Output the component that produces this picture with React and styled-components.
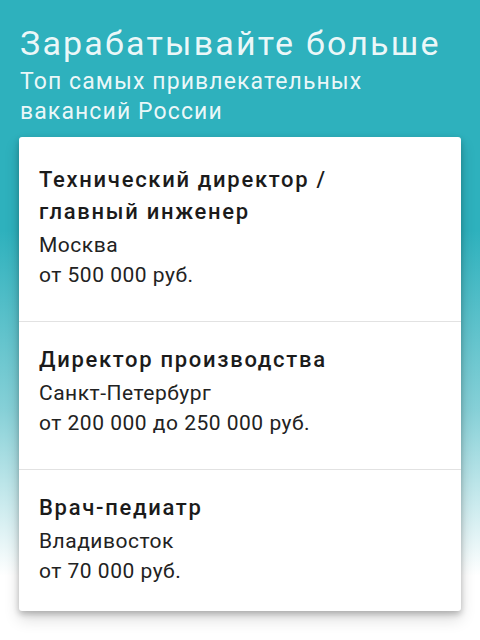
import React from "react";
import styled, { createGlobalStyle } from "styled-components";

const jobs = [
  {
    title: "Технический директор / главный инженер",
    city: "Москва",
    salary: "от 500 000 руб.",
    top: 27,
    bottom: 31,
  },
  {
    title: "Директор производства",
    city: "Санкт-Петербург",
    salary: "от 200 000 до 250 000 руб.",
    top: 22,
    bottom: 31,
  },
  {
    title: "Врач-педиатр",
    city: "Владивосток",
    salary: "от 70 000 руб.",
    top: 22,
    bottom: 25,
  },
];

const App = () => {
  return (
    <>
      <GlobalStyle />
      <Page>
        <Header>
          <Title>Зарабатывайте больше</Title>
          <Subtitle>Топ самых привлекательных вакансий России</Subtitle>
        </Header>
        <Card>
          {jobs.map((job) => (
            <Job key={job.title} $top={job.top} $bottom={job.bottom}>
              <JobTitle>{job.title}</JobTitle>
              <JobLine>{job.city}</JobLine>
              <JobLine>{job.salary}</JobLine>
            </Job>
          ))}
        </Card>
      </Page>
    </>
  );
};

const GlobalStyle = createGlobalStyle`
  * {
    box-sizing: border-box;
  }
  body {
    margin: 0;
    font-family: Roboto, "Noto Sans", "Liberation Sans", sans-serif;
  }
`;

const Page = styled.div`
  min-height: 640px;
  padding-top: 23px;
  background: linear-gradient(
    180deg,
    #2eb1bd 0%,
    #2eb1bd 36%,
    #86d0d7 64%,
    #ffffff 90%
  );
`;

const Header = styled.header`
  padding: 0 20px;
  color: rgba(255, 255, 255, 0.92);
`;

const Title = styled.h1`
  margin: 0;
  font-size: 34px;
  font-weight: 400;
  line-height: 40px;
  letter-spacing: 2.2px;
  white-space: nowrap;
`;

const Subtitle = styled.p`
  margin: 4px 0 0;
  font-size: 23px;
  font-weight: 400;
  line-height: 30px;
  letter-spacing: 1.1px;
  max-width: 400px;
`;

const Card = styled.div`
  margin: 10px 19px 0;
  background: #fff;
  border-radius: 3px;
  box-shadow: 0 3px 6px rgba(0, 0, 0, 0.24), 0 8px 16px rgba(0, 0, 0, 0.14);
`;

const Job = styled.div`
  padding: ${(p) => p.$top}px 20px ${(p) => p.$bottom}px;
  & + & {
    border-top: 1px solid #e2e2e2;
  }
`;

const JobTitle = styled.h2`
  margin: 0 0 2px;
  font-size: 22px;
  font-weight: 500;
  line-height: 32px;
  letter-spacing: 1.7px;
  color: #1b1b1b;
  max-width: 310px;
`;

const JobLine = styled.div`
  font-size: 21px;
  line-height: 30px;
  letter-spacing: 0.5px;
  color: #222;
`;

export default App;
